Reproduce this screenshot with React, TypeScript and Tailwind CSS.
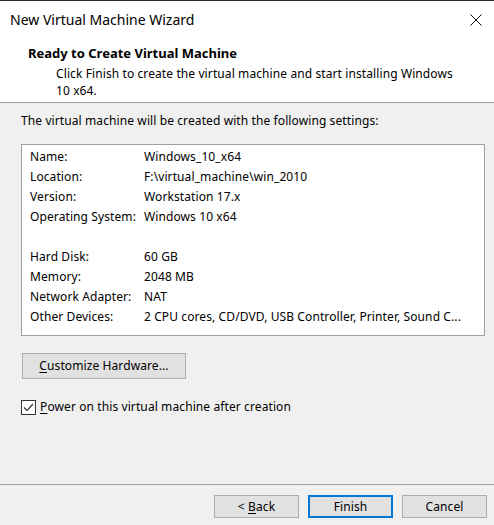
const settings: [string, string][] = [
  ['Name:', 'Windows_10_x64'],
  ['Location:', 'F:\\virtual_machine\\win_2010'],
  ['Version:', 'Workstation 17.x'],
  ['Operating System:', 'Windows 10 x64'],
  ['', ''],
  ['Hard Disk:', '60 GB'],
  ['Memory:', '2048 MB'],
  ['Network Adapter:', 'NAT'],
  ['Other Devices:', '2 CPU cores, CD/DVD, USB Controller, Printer, Sound C...'],
];

function WizardButton({ label, accel, primary }: { label: string; accel?: string; primary?: boolean }) {
  // accel = the character that gets the underline
  const idx = accel ? label.indexOf(accel) : -1;
  return (
    <button
      type="button"
      className={`w-[85px] h-[23px] bg-[#e1e1e1] text-[12px] text-black flex items-center justify-center ${
        primary ? 'border-2 border-[#0078d7]' : 'border border-[#adadad]'
      }`}
    >
      {idx >= 0 ? (
        <span>
          {label.slice(0, idx)}
          <span className="underline underline-offset-2">{label[idx]}</span>
          {label.slice(idx + 1)}
        </span>
      ) : (
        label
      )}
    </button>
  );
}

export default function App() {
  return (
    <div
      className="w-[494px] h-[525px] flex flex-col bg-[#f0f0f0] text-black overflow-hidden tracking-[0.1px]"
      style={{ fontFamily: '"Noto Sans", sans-serif' }}
    >
      {/* title bar */}
      <div className="bg-white border-t border-[#2b2b2b] h-[38px] flex items-center justify-between pl-[10px] pr-[12px] shrink-0">
        <span className="text-[14px] tracking-normal">New Virtual Machine Wizard</span>
        <svg width="12" height="12" viewBox="0 0 12 12" className="mt-[1px]">
          <path d="M0.5 0.5 L11.5 11.5 M11.5 0.5 L0.5 11.5" stroke="#111" strokeWidth="1" />
        </svg>
      </div>

      {/* header */}
      <div className="bg-white border-b border-[#a0a0a0] h-[65px] pt-[6px] shrink-0">
        <div className="pl-[28px] text-[13px] font-bold leading-[18px] tracking-normal">Ready to Create Virtual Machine</div>
        <p className="pl-[56px] w-[461px] text-[12px] leading-[17px] mt-[3px]">
          Click Finish to create the virtual machine and start installing Windows 10 x64.
        </p>
      </div>

      {/* body */}
      <div className="flex-1 px-[21px] pt-[9px]">
        <p className="text-[12px] leading-[17px]">The virtual machine will be created with the following settings:</p>

        <div className="mt-[15px] w-[464px] h-[192px] bg-white border border-[#a0a0a0] pt-[2px] pl-[8px]">
          {settings.map(([k, v], i) => (
            <div key={i} className="flex h-[20px] items-center text-[12px] whitespace-nowrap">
              <span className="w-[114px] shrink-0">{k}</span>
              <span>{v}</span>
            </div>
          ))}
        </div>

        <button
          type="button"
          className="mt-[17px] ml-[1px] w-[164px] h-[26px] bg-[#e1e1e1] border border-[#adadad] text-[12px] flex items-center justify-center"
        >
          <span>
            <span className="underline underline-offset-2">C</span>ustomize Hardware...
          </span>
        </button>

        <label className="mt-[19px] flex items-center gap-[4px] text-[12px]">
          <span className="w-[15px] h-[15px] border border-[#333] bg-white flex items-center justify-center">
            <svg width="11" height="9" viewBox="0 0 11 9">
              <path d="M1 4.5 L4 7.5 L10 1" fill="none" stroke="#333" strokeWidth="1.2" />
            </svg>
          </span>
          <span>
            <span className="underline underline-offset-2">P</span>ower on this virtual machine after creation
          </span>
        </label>
      </div>

      {/* footer */}
      <div className="h-[41px] border-t border-[#a0a0a0] flex items-start justify-end gap-[9px] pt-[10px] pr-[7px] shrink-0">
        <WizardButton label="< Back" accel="B" />
        <WizardButton label="Finish" primary />
        <WizardButton label="Cancel" />
      </div>
    </div>
  );
}
